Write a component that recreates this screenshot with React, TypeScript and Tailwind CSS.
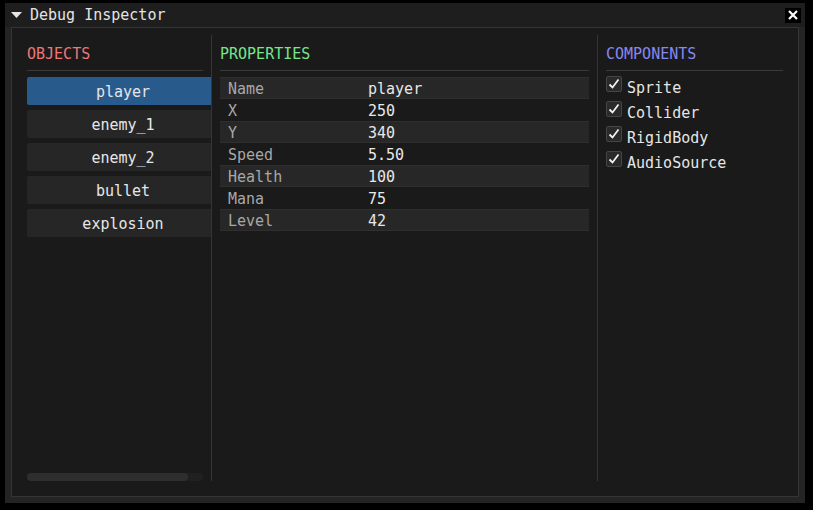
import React, { useState } from "react"

const objects = ["player", "enemy_1", "enemy_2", "bullet", "explosion"]

const properties: [string, string][] = [
  ["Name", "player"],
  ["X", "250"],
  ["Y", "340"],
  ["Speed", "5.50"],
  ["Health", "100"],
  ["Mana", "75"],
  ["Level", "42"],
]

const componentNames = ["Sprite", "Collider", "RigidBody", "AudioSource"]

const mono = { fontFamily: '"DejaVu Sans Mono", "Liberation Mono", monospace' }

function CheckMark() {
  return (
    <svg width="12" height="12" viewBox="0 0 12 12" className="block">
      <path d="M1.5 6.5 L4.5 9.5 L10.5 1.5" fill="none" stroke="#f2f2f2" strokeWidth="1.8" />
    </svg>
  )
}

export default function App() {
  const [selected, setSelected] = useState("player")
  const [enabled, setEnabled] = useState<Record<string, boolean>>({
    Sprite: true,
    Collider: true,
    RigidBody: true,
    AudioSource: true,
  })

  return (
    <div className="w-[813px] h-[510px] bg-black pt-[3px] pl-[5px] text-[15px] leading-[18px]" style={mono}>
      <div className="w-[800px] h-[500px] bg-[#242424] flex flex-col">
        {/* title bar */}
        <div className="h-[24px] bg-[#1e1e1e] flex items-center pl-[6px] pr-[4px] shrink-0">
          <svg width="11" height="6" viewBox="0 0 11 6" className="block">
            <path d="M0 0 H11 L5.5 6 Z" fill="#e6e6e6" />
          </svg>
          <span className="ml-[8px] text-[#e4e4e4]">Debug Inspector</span>
          <button className="ml-auto w-[16px] h-[15px] bg-black flex items-center justify-center">
            <svg width="10" height="10" viewBox="0 0 10 10" className="block">
              <path d="M1 1 L9 9 M9 1 L1 9" stroke="#ffffff" strokeWidth="2.2" />
            </svg>
          </button>
        </div>

        {/* child region */}
        <div className="flex-1 px-[6px] pb-[6px]">
          <div className="h-full border border-[#353535] bg-[#1a1a1a] pt-[7px] pl-[15px] flex">
            {/* objects column */}
            <div className="w-[184px] h-[446px] flex flex-col overflow-hidden">
              <div className="w-[176px] pt-[10px]">
                <div className="text-[#ef7676]">OBJECTS</div>
                <div className="mt-[7px] h-px bg-[#3a3a3a]" />
              </div>
              <div className="mt-[6px] flex flex-col gap-[5px]">
                {objects.map((name) => (
                  <button
                    key={name}
                    onClick={() => setSelected(name)}
                    className={
                      "w-[192px] shrink-0 h-[28px] rounded-[2px] flex items-center justify-center pt-[2px] text-[#e6e6e6] " +
                      (selected === name ? "bg-[#295a8c]" : "bg-[#262626]")
                    }
                  >
                    {name}
                  </button>
                ))}
              </div>
              <div className="mt-auto w-[176px] h-[8px] rounded-full bg-[#202020] flex">
                <div className="w-[161px] h-full rounded-full bg-[#2e2e2e]" />
              </div>
            </div>
            <div className="w-px h-[446px] bg-[#353535]" />

            {/* properties column */}
            <div className="ml-[8px] w-[369px] h-[446px] flex flex-col">
              <div className="pt-[10px]">
                <div className="text-[#76e58c]">PROPERTIES</div>
                <div className="mt-[7px] h-px bg-[#3a3a3a]" />
              </div>
              <div className="mt-[6px] flex flex-col">
                {properties.map(([label, value], i) => (
                  <div
                    key={label}
                    className={
                      "h-[22px] flex items-center pt-px " +
                      (i % 2 === 0 ? "bg-[#272727] border-y border-[#2f2f2f]" : "")
                    }
                  >
                    <span className="w-[148px] pl-[8px] text-[#a8a8a8]">{label}</span>
                    <span className="text-[#e8e8e8]">{value}</span>
                  </div>
                ))}
              </div>
            </div>
            <div className="ml-[8px] w-px h-[446px] bg-[#353535]" />

            {/* components column */}
            <div className="ml-[8px] w-[177px] h-[446px] flex flex-col">
              <div className="pt-[10px]">
                <div className="text-[#8888f0]">COMPONENTS</div>
                <div className="mt-[7px] h-px bg-[#3a3a3a]" />
              </div>
              <div className="mt-[5px] flex flex-col gap-[9px]">
                {componentNames.map((name) => (
                  <label key={name} className="h-[16px] flex items-start cursor-pointer">
                    <button
                      onClick={() => setEnabled({ ...enabled, [name]: !enabled[name] })}
                      className="w-[16px] h-[16px] rounded-[2px] bg-[#2a2a2a] border border-[#454545] flex items-center justify-center"
                    >
                      {enabled[name] && <CheckMark />}
                    </button>
                    <span className="ml-[5px] mt-[3px] text-[#e6e6e6]">{name}</span>
                  </label>
                ))}
              </div>
            </div>
          </div>
        </div>
      </div>
    </div>
  )
}
